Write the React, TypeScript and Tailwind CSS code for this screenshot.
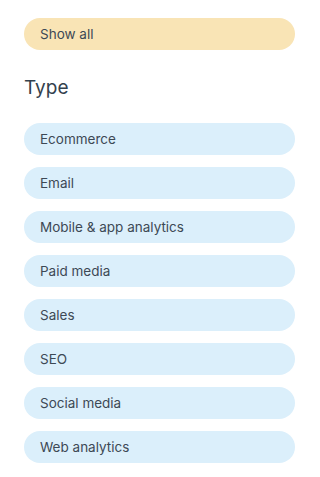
import React from 'react';

const types = [
  'Ecommerce',
  'Email',
  'Mobile & app analytics',
  'Paid media',
  'Sales',
  'SEO',
  'Social media',
  'Web analytics',
];

const App: React.FC = () => {
  return (
    <div className="min-h-screen bg-white px-6 pt-[18px] text-[#3d4955]" style={{ fontFamily: 'Inter, "Noto Sans", sans-serif' }}>
      <button className="flex h-8 w-[271px] items-center rounded-full bg-[#f9e4b5] px-4 text-left text-[13.5px]">
        Show all
      </button>

      <h2 className="mt-[26px] text-[19px] leading-[24px] text-[#33414d]">Type</h2>

      <ul className="mt-[23px] flex flex-col gap-3">
        {types.map((t) => (
          <li key={t}>
            <button className="flex h-8 w-[271px] items-center rounded-full bg-[#dbeffb] px-4 text-left text-[13.5px]">
              {t}
            </button>
          </li>
        ))}
      </ul>
    </div>
  );
};

export default App;
